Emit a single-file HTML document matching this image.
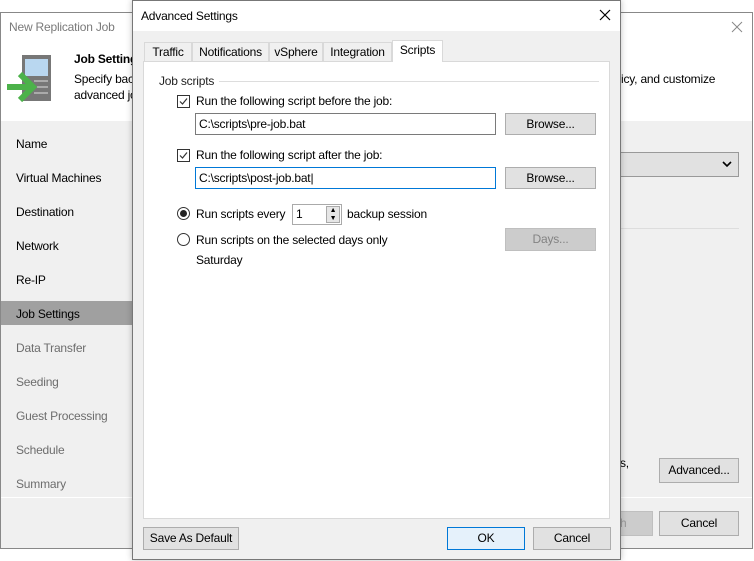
<!DOCTYPE html>
<html><head><meta charset="utf-8"><style>
*{box-sizing:border-box;margin:0;padding:0}
body{width:754px;height:561px;background:#fff;position:relative;overflow:hidden;font-family:"Liberation Sans",sans-serif;font-size:12px;color:#000;letter-spacing:-0.2px}
.a{position:absolute}
.btn{position:absolute;background:#e1e1e1;border:1px solid #adadad;text-align:center;line-height:20px;font-size:12px}
.nav{position:absolute;left:16px;font-size:12px}
.g{color:#6d6d6d}
.tb{position:absolute;background:#fff;border:1px solid #7a7a7a;padding-left:3px;line-height:20px}
.cb{position:absolute;width:13px;height:13px;border:1px solid #333;background:#fff}
.rb{position:absolute;width:13px;height:13px;border:1px solid #333;border-radius:50%;background:#fff}
.tab{position:absolute;top:42px;height:20px;border:1px solid #d9d9d9;border-bottom:none;background:#f0f0f0;line-height:18px;text-align:center;font-size:12px}
</style></head><body>
<div class="a" style="left:0;top:12px;width:753px;height:537px;border:1px solid #888;background:#f0f0f0"></div>
<div class="a" style="left:1px;top:13px;width:751px;height:108px;background:#fff"></div>
<div class="a g" style="left:9px;top:20px;font-size:12px;color:#7a7a7a">New Replication Job</div>
<svg class="a" style="left:731px;top:21px" width="12" height="12"><path d="M1 1L11 11M11 1L1 11" stroke="#888" stroke-width="1"/></svg>
<svg class="a" style="left:6px;top:54px" width="46" height="48">
<rect x="16" y="1" width="29" height="46" fill="#777"/>
<rect x="19" y="5" width="23" height="17" fill="#b9d7f0"/>
<path d="M28 27H42M28 33H42M28 39H42" stroke="#ddd" stroke-width="1"/>
<path d="M1 33H26" stroke="#4cb24a" stroke-width="6"/>
<path d="M14 20L27 33L14 46" fill="none" stroke="#4cb24a" stroke-width="6"/>
</svg>
<div class="a" style="left:74px;top:52px;font-weight:bold">Job Settings</div>
<div class="a" style="left:74px;top:72px">Specify backup</div>
<div class="a" style="left:74px;top:88px">advanced job</div>
<div class="a" style="left:621px;top:72px">icy, and customize</div>
<div class="a" style="left:620px;top:152px;width:119px;height:25px;background:#e1e1e1;border:1px solid #999;border-left:none"></div>
<svg class="a" style="left:722px;top:161px" width="10" height="7"><path d="M1 1L5 5L9 1" fill="none" stroke="#000" stroke-width="1.6"/></svg>
<div class="a" style="left:620px;top:228px;width:119px;height:1px;background:#ddd"></div>
<div class="a" style="left:620px;top:456px">s,</div>
<div class="btn" style="left:659px;top:458px;width:80px;height:25px;line-height:23px">Advanced...</div>
<div class="a" style="left:1px;top:497px;width:751px;height:1px;background:#fff"></div>
<div class="btn" style="left:620px;top:511px;width:33px;height:25px;background:#ccc;border-color:#bfbfbf;border-left:none;color:#999;line-height:23px;text-align:left">h</div>
<div class="btn" style="left:659px;top:511px;width:80px;height:25px;line-height:23px">Cancel</div>
<div class="a" style="left:1px;top:301px;width:131px;height:24px;background:#a0a0a0"></div>
<div class="nav" style="top:137px">Name</div>
<div class="nav" style="top:171px">Virtual Machines</div>
<div class="nav" style="top:205px">Destination</div>
<div class="nav" style="top:239px">Network</div>
<div class="nav" style="top:273px">Re-IP</div>
<div class="nav" style="top:307px">Job Settings</div>
<div class="nav g" style="top:341px">Data Transfer</div>
<div class="nav g" style="top:375px">Seeding</div>
<div class="nav g" style="top:409px">Guest Processing</div>
<div class="nav g" style="top:443px">Schedule</div>
<div class="nav g" style="top:477px">Summary</div>

<div class="a" style="left:132px;top:0;width:489px;height:560px;border:1px solid #777;background:#f0f0f0;box-shadow:0 0 6px rgba(0,0,0,.25)"></div>
<div class="a" style="left:133px;top:1px;width:487px;height:30px;background:#fff"></div>
<div class="a" style="left:141px;top:9px">Advanced Settings</div>
<svg class="a" style="left:599px;top:9px" width="12" height="12"><path d="M1 1L11 11M11 1L1 11" stroke="#000" stroke-width="1.2"/></svg>
<div class="tab" style="left:144px;width:48px">Traffic</div>
<div class="tab" style="left:192px;width:77px">Notifications</div>
<div class="tab" style="left:269px;width:54px">vSphere</div>
<div class="tab" style="left:323px;width:69px">Integration</div>
<div class="a" style="left:143px;top:61px;width:467px;height:458px;background:#fff;border:1px solid #d9d9d9"></div>
<div class="tab" style="left:392px;top:40px;width:51px;height:22px;background:#fff;line-height:18px">Scripts</div>
<div class="a" style="left:159px;top:74px;color:#222">Job scripts</div>
<div class="a" style="left:219px;top:81px;width:380px;height:1px;background:#ddd"></div>
<div class="cb" style="left:177px;top:95px"></div><svg class="a" style="left:178px;top:96px" width="11" height="11"><path d="M2 5.5L4.5 8L9 2.5" fill="none" stroke="#333" stroke-width="1.2"/></svg>
<div class="a" style="left:196px;top:94px">Run the following script before the job:</div>
<div class="tb" style="left:195px;top:113px;width:301px;height:22px">C:\scripts\pre-job.bat</div>
<div class="btn" style="left:505px;top:113px;width:91px;height:22px">Browse...</div>
<div class="cb" style="left:177px;top:149px"></div><svg class="a" style="left:178px;top:150px" width="11" height="11"><path d="M2 5.5L4.5 8L9 2.5" fill="none" stroke="#333" stroke-width="1.2"/></svg>
<div class="a" style="left:196px;top:148px">Run the following script after the job:</div>
<div class="tb" style="left:195px;top:167px;width:301px;height:22px;border-color:#0078d7">C:\scripts\post-job.bat|</div>
<div class="btn" style="left:505px;top:167px;width:91px;height:22px">Browse...</div>
<div class="rb" style="left:177px;top:207px"></div><div class="a" style="left:180px;top:210px;width:7px;height:7px;border-radius:50%;background:#222"></div>
<div class="a" style="left:196px;top:207px">Run scripts every</div>
<div class="tb" style="left:292px;top:204px;width:50px;height:21px;border-color:#aaa;line-height:19px">1</div>
<div class="a" style="left:326px;top:206px;width:14px;height:17px;background:#e6e6e6;border:1px solid #aaa;font-size:7px;line-height:8px;text-align:center">▲<br>▼</div>
<div class="a" style="left:347px;top:207px">backup session</div>
<div class="rb" style="left:177px;top:233px"></div>
<div class="a" style="left:196px;top:233px">Run scripts on the selected days only</div>
<div class="btn" style="left:505px;top:228px;width:91px;height:23px;background:#ccc;border-color:#bfbfbf;color:#838383">Days...</div>
<div class="a" style="left:196px;top:253px">Saturday</div>
<div class="btn" style="left:143px;top:527px;width:96px;height:23px">Save As Default</div>
<div class="btn" style="left:447px;top:527px;width:78px;height:23px;background:#e5f1fb;border-color:#0078d7">OK</div>
<div class="btn" style="left:533px;top:527px;width:78px;height:23px">Cancel</div>
</body></html>
